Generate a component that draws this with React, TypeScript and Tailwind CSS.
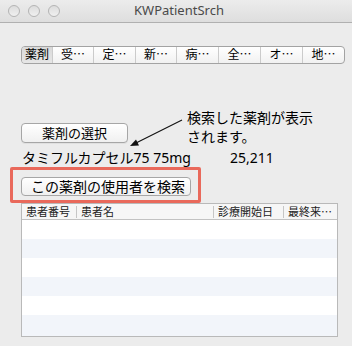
import React from "react";

const font = { fontFamily: '"Noto Sans", "Noto Sans CJK JP", sans-serif' };

const segs: { label: string; w: string; sel?: boolean }[] = [
  { label: "薬剤", w: "w-[30px]", sel: true },
  { label: "受⋯", w: "w-[41px]" },
  { label: "定⋯", w: "w-[42px]" },
  { label: "新⋯", w: "w-[41px]" },
  { label: "病⋯", w: "w-[42px]" },
  { label: "全⋯", w: "w-[42px]" },
  { label: "オ⋯", w: "w-[42px]" },
  { label: "地⋯", w: "w-[42px]" },
];

function Light() {
  return (
    <div className="w-[12px] h-[12px] rounded-full border border-[#b4b4b4] bg-gradient-to-b from-[#dcdcdc] to-[#f0f0f0]" />
  );
}

export default function App() {
  return (
    <div
      className="relative w-[352px] h-[346px] bg-[#ececec] overflow-hidden text-black"
      style={font}
    >
      {/* title bar */}
      <div className="relative h-[23px] border-b border-[#b0b0b0] bg-gradient-to-b from-[#ececec] to-[#dedede] flex items-center">
        <div className="flex gap-[8px] pl-[8px]">
          <Light />
          <Light />
          <Light />
        </div>
        <div className="absolute inset-0 flex items-center justify-center pl-[6px] text-[13px] text-[#4a4a4a]">
          KWPatientSrch
        </div>
      </div>

      <div className="px-[21px] flex flex-col">
        {/* segmented control */}
        <div className="mt-[23px] flex h-[18px] w-[324px] rounded-[4px] border border-[#a3a3a3] overflow-hidden bg-gradient-to-b from-[#ffffff] to-[#f1f1f1]">
          {segs.map((s, i) => (
            <div
              key={i}
              className={`${s.w} h-full flex items-center justify-center text-[12px] leading-none ${
                i > 0 ? "border-l border-[#cbcbcb]" : ""
              } ${s.sel ? "bg-gradient-to-b from-[#d9d9d9] to-[#e6e6e6]" : ""}`}
            >
              {s.label}
            </div>
          ))}
        </div>

        {/* button 1 */}
        <button className="mt-[59px] w-[107px] h-[20px] rounded-[4px] border border-[#a6a6a6] bg-gradient-to-b from-[#ffffff] to-[#f0f0f0] text-[13px] leading-none flex items-center justify-center shadow-[0_1px_0_rgba(0,0,0,0.05)]">
          薬剤の選択
        </button>

        {/* drug line */}
        <div className="mt-[6px] h-[18px] flex items-center text-[14px] leading-[18px]">
          <span className="w-[209px] pl-[1px]">タミフルカプセル75 75mg</span>
          <span>25,211</span>
        </div>

        {/* red highlight with button 2 */}
        <div className="ml-[-11px] w-[191px] h-[36px] border-[3px] border-[#e9695b] rounded-[2px] pl-[8px] pt-[7px]">
          <button className="w-[170px] h-[19px] rounded-[4px] border border-[#a6a6a6] bg-gradient-to-b from-[#ffffff] to-[#f0f0f0] text-[14px] leading-none flex items-center justify-center pl-[4px]">
            この薬剤の使用者を検索
          </button>
        </div>

        {/* table */}
        <div className="w-[317px] h-[134px] border border-[#b9b9b9] bg-white overflow-hidden flex flex-col">
          <div className="h-[16px] shrink-0 border-b border-[#c2c2c2] bg-[#f6f6f6] flex items-center text-[11px] leading-none text-[#222]">
            <div className="w-[54px] pl-[4px]">患者番号</div>
            <div className="w-[137px] pl-[4px] border-l border-[#c6c6c6] h-[12px] flex items-center">患者名</div>
            <div className="w-[70px] pl-[4px] border-l border-[#c6c6c6] h-[12px] flex items-center">診療開始日</div>
            <div className="flex-1 pl-[4px] border-l border-[#c6c6c6] h-[12px] flex items-center">最終来⋯</div>
          </div>
          <div className="h-[19px] shrink-0 bg-white" />
          <div className="h-[19px] shrink-0 bg-[#f2f5fa]" />
          <div className="h-[19px] shrink-0 bg-white" />
          <div className="h-[19px] shrink-0 bg-[#f2f5fa]" />
          <div className="h-[19px] shrink-0 bg-white" />
          <div className="h-[21px] shrink-0 bg-[#f2f5fa]" />
        </div>
      </div>

      {/* annotation callout */}
      <div className="absolute left-[187px] top-[108px] text-[14px] leading-[19px]">
        <div>検索した薬剤が表示</div>
        <div>されます。</div>
      </div>
      <svg
        className="absolute left-0 top-0 pointer-events-none"
        width="352"
        height="346"
        viewBox="0 0 352 346"
      >
        <line x1="182" y1="120" x2="136" y2="143" stroke="#111" strokeWidth="1.2" />
        <polygon points="130,146 136,139.5 139,145.5" fill="#111" />
      </svg>
    </div>
  );
}
